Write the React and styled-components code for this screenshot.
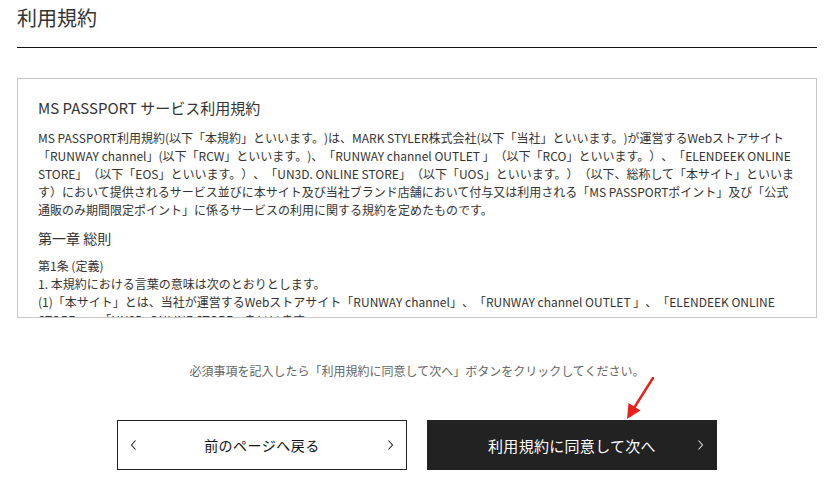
import React from "react";
import styled, { createGlobalStyle } from "styled-components";

const Global = createGlobalStyle`
  html, body { margin: 0; padding: 0; background: #fff; }
  body {
    font-family: "Noto Sans CJK JP", "Noto Sans", sans-serif;
    color: #333;
    text-spacing-trim: space-all;
  }
`;

const Page = styled.div`
  position: relative;
  width: 800px;
  padding: 3px 0 0 17px;
`;

const PageTitle = styled.h1`
  margin: 0;
  font-size: 20px;
  font-weight: 400;
  line-height: 30px;
  padding-bottom: 14px;
  border-bottom: 1px solid #111;
  color: #333;
`;

const TermsBox = styled.div`
  margin-top: 30px;
  height: 240px;
  box-sizing: border-box;
  border: 1px solid #c8c8c8;
  padding: 18px 20px;
  overflow: hidden;
`;

const TermsTitle = styled.h2`
  margin: 0 0 10px;
  font-size: 15px;
  font-weight: 400;
  line-height: 22px;
  color: #333;
`;

const Chapter = styled.h3`
  margin: 9px 0 8px;
  font-size: 14px;
  font-weight: 400;
  line-height: 21px;
  color: #333;
`;

const Para = styled.p`
  margin: 0;
  font-size: 12px;
  line-height: 18px;
  color: #333;
`;

const Note = styled.p`
  margin: 44px 0 0;
  text-align: center;
  font-size: 12px;
  line-height: 18px;
  color: #666;
`;

const Actions = styled.div`
  display: flex;
  justify-content: center;
  gap: 20px;
  margin-top: 40px;
`;

const Btn = styled.a`
  position: relative;
  display: flex;
  align-items: center;
  justify-content: center;
  width: 290px;
  height: 50px;
  box-sizing: border-box;
  font-size: ${(p) => (p.$dark ? "15px" : "14px")};
  letter-spacing: ${(p) => (p.$dark ? "0.3px" : "0.5px")};
  text-decoration: none;
  cursor: pointer;
  background: ${(p) => (p.$dark ? "#222" : "#fff")};
  color: ${(p) => (p.$dark ? "#fff" : "#111")};
  border: 1px solid #222;
`;

const Chevron = styled.svg`
  position: absolute;
  top: 50%;
  margin-top: -5px;
  ${(p) => (p.$side === "left" ? "left: 12px;" : "right: 12px;")}
`;

const Arrow = styled.svg`
  position: absolute;
  left: 620px;
  top: 375px;
  pointer-events: none;
`;

const ChevronIcon = ({ side, color }) => (
  <Chevron $side={side} width="7" height="10" viewBox="0 0 7 10">
    <path
      d={side === "left" ? "M5.5 0.5 L1.5 5 L5.5 9.5" : "M1.5 0.5 L5.5 5 L1.5 9.5"}
      fill="none"
      stroke={color}
      strokeWidth="1.1"
    />
  </Chevron>
);

export default function App() {
  return (
    <>
      <Global />
      <Page>
        <PageTitle>利用規約</PageTitle>

        <TermsBox>
          <TermsTitle>MS PASSPORT サービス利用規約</TermsTitle>
          <Para>
            MS PASSPORT利用規約(以下「本規約」といいます。)は、MARK STYLER株式会社(以下「当社」といいます。)が運営するWebストアサイト「RUNWAY channel」(以下「RCW」といいます。)、「RUNWAY channel OUTLET 」（以下「RCO」といいます。）、「ELENDEEK ONLINE STORE」（以下「EOS」といいます。）、「UN3D. ONLINE STORE」（以下「UOS」といいます。）（以下、総称して「本サイト」といいます）において提供されるサービス並びに本サイト及び当社ブランド店舗において付与又は利用される「MS PASSPORTポイント」及び「公式通販のみ期間限定ポイント」に係るサービスの利用に関する規約を定めたものです。
          </Para>
          <Chapter>第一章 総則</Chapter>
          <Para>第1条 (定義)</Para>
          <Para>1. 本規約における言葉の意味は次のとおりとします。</Para>
          <Para>
            (1)「本サイト」とは、当社が運営するWebストアサイト「RUNWAY channel」、「RUNWAY channel OUTLET 」、「ELENDEEK ONLINE STORE」、「UN3D. ONLINE STORE」をいいます。
          </Para>
          <Para>
            (2)「会員」とは、本規約に同意の上、当社所定の方法により会員登録を行った個人をいいます。
          </Para>
        </TermsBox>

        <Note>必須事項を記入したら「利用規約に同意して次へ」ボタンをクリックしてください。</Note>

        <Actions>
          <Btn>
            <ChevronIcon side="left" color="#222" />
            前のページへ戻る
            <ChevronIcon side="right" color="#222" />
          </Btn>
          <Btn $dark>
            利用規約に同意して次へ
            <ChevronIcon side="right" color="#ddd" />
          </Btn>
        </Actions>

        <Arrow width="40" height="48" viewBox="0 0 40 48">
          <line x1="33" y1="3" x2="14" y2="33" stroke="#e8201a" strokeWidth="2.4" strokeLinecap="round" />
          <polygon points="7,44 8.5,28 20.5,35.5" fill="#e8201a" />
        </Arrow>
      </Page>
    </>
  );
}
